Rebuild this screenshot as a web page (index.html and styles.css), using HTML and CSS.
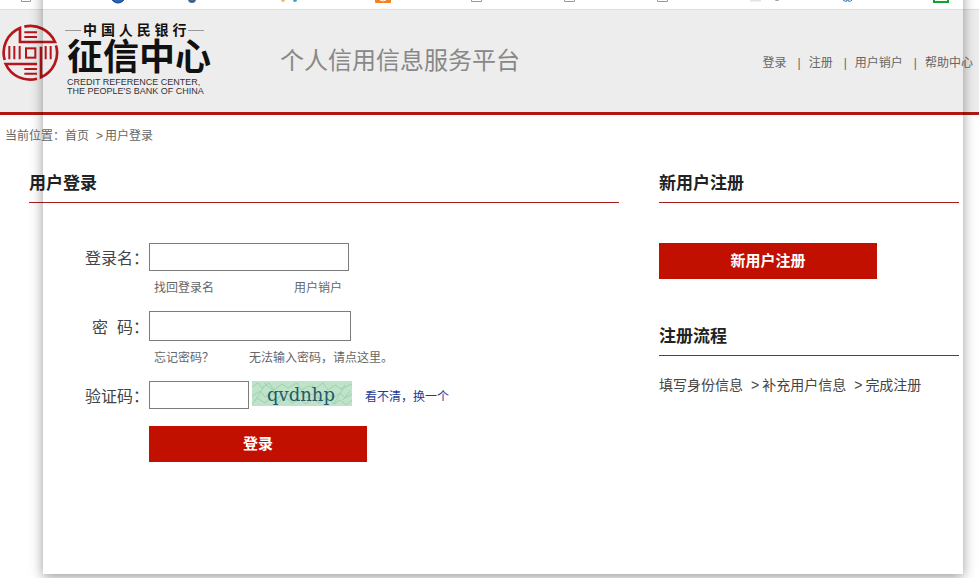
FILE: index.html
```html
<!DOCTYPE html>
<html lang="zh-CN">
<head>
  <meta charset="UTF-8">
  <meta name="viewport" content="width=device-width, initial-scale=1.0">
  <title>个人信用信息服务平台</title>
  <link rel="stylesheet" href="styles.css">
</head>
<body>
  <!-- 顶部书签栏 -->
  <div class="bookmarks">
    <svg width="979" height="9" viewBox="0 0 979 9" aria-hidden="true">
      <g fill="none" stroke="#999">
        <path d="M21.5 0V1.5H30.5V0M471.5 0V1.5H481.5V0M564.5 0V1.5H574.5V0M657.5 0V1.5H667.5V0"/>
      </g>
      <circle cx="118" cy="-4" r="7" fill="#2763b8" stroke="#163c7d"/>
      <circle cx="192" cy="-1" r="4" fill="#456390"/>
      <circle cx="283" cy="0" r="2" fill="#e0c36a"/>
      <circle cx="295" cy="0" r="2" fill="#3ea2c8"/>
      <rect x="375" y="-10" width="16" height="13" rx="1" fill="#f5821f"/>
      <path d="M380 0q3 2 6 0" stroke="#fff" fill="none"/>
      <path d="M750 .5H761" stroke="#e4e4e4" stroke-width="2"/>
      <path d="M775 0q2 1 4 0" stroke="#999" fill="none"/>
      <path d="M843 0q2 2 4 1v-1M848 0v1q3 1 4-1" stroke="#2f74c9" fill="none"/>
      <path d="M934 0V2H948V0" stroke="#17a02b" stroke-width="2" fill="none"/>
    </svg>
  </div>

  <header class="header">
    <a class="logo" href="#">
      <svg class="seal" width="58" height="58" viewBox="0 0 174 174" fill="none" stroke="#b5161b" aria-hidden="true">
        <g stroke-width="8">
          <path d="M70 8A80 80 0 0 1 162 54H57V12A80 80 0 0 0 11 108"/>
          <path d="M108 164A80 80 0 0 1 14 120H108"/>
          <path d="M120 68V160A80 80 0 0 0 165 64"/>
        </g>
        <g stroke-width="6">
          <path d="M70 25H108M70 39H108M70 135H108M70 149H108"/>
          <path d="M25 66V106M40 66V106M56 66V106M134 66V106M149 66V106"/>
          <rect x="75" y="73" width="28" height="28"/>
        </g>
      </svg>
      <span class="logo-text">
        <span class="logo-bank">中 国 人 民 银 行</span>
        <span class="logo-name">征信中心</span>
        <span class="logo-en">CREDIT REFERENCE CENTER,</span>
        <span class="logo-en">THE PEOPLE'S BANK OF CHINA</span>
      </span>
    </a>
    <h1 class="title">个人信用信息服务平台</h1>
    <nav class="nav">
      <a href="#">登录</a><span>|</span>
      <a href="#">注册</a><span>|</span>
      <a href="#">用户销户</a><span>|</span>
      <a href="#">帮助中心</a>
    </nav>
  </header>

  <div class="location">
    当前位置：<a href="#">首页</a><span class="arrow">&gt;</span>用户登录
  </div>

  <main class="main">
    <!-- 登录表单 -->
    <section>
      <h2>用户登录</h2>
      <form class="login-form">
        <label for="username">登录名：</label>
        <input type="text" id="username" name="username">

        <div class="hint">
          <a class="first" href="#">找回登录名</a>
          <a href="#">用户销户</a>
        </div>

        <label for="password">密&nbsp; 码：</label>
        <input type="password" id="password" name="password">

        <div class="hint">
          <a href="#">忘记密码？</a>
          <a class="second" href="#">无法输入密码，请点这里。</a>
        </div>

        <label for="code">验证码：</label>
        <div class="captcha">
          <input type="text" id="code" name="code">
          <svg width="100" height="25" viewBox="0 0 100 25">
            <rect width="100" height="25" fill="#bfe3c8"/>
            <g fill="none" stroke="#a0d0b0">
              <path d="M0 6l6-4 4 5 7-5 5 7 8-6 6 4 9-5 4 7 8-4 6 3 8-6 5 7 7-5 6 4 11-5"/>
              <path d="M0 15l8-5 5 6 7-4 5 5 9-6 5 5 7-6 8 7 6-4 7 5 6-7 8 6 7-5 5 5 7-4"/>
              <path d="M0 23l5-6 8 5 6-5 6 6 8-7 7 6 8-4 5 5 9-5 5 4 8-6 7 7 6-4 6 5 6-5"/>
              <path d="M3 20l9-15M24 22l5-9M60 4l8 15M82 23l11-19M91 19l7-9M12 2l10 8"/>
            </g>
            <text class="captcha-text" x="49" y="20" text-anchor="middle">qvdnhp</text>
          </svg>
          <a href="#">看不清，换一个</a>
        </div>

        <button type="submit" class="btn">登录</button>
      </form>
    </section>

    <!-- 注册 -->
    <aside>
      <h2>新用户注册</h2>
      <button type="button" class="btn btn-register">新用户注册</button>
      <h2>注册流程</h2>
      <p class="steps">填写身份信息<span class="arrow">&gt;</span>补充用户信息<span class="arrow">&gt;</span>完成注册</p>
    </aside>
  </main>

  <!-- 窗口阴影 -->
  <div class="frame"></div>
</body>
</html>
```
FILE: styles.css
```css
* {
  box-sizing: border-box;
}
body {
  margin: 0;
  background: #fff;
  color: #666;
  font-family: "Liberation Sans", "Noto Sans CJK SC", sans-serif;
  font-size: 12px;
}
a {
  color: inherit;
  text-decoration: none;
}
.bookmarks {
  height: 10px;
  overflow: hidden;
  border-bottom: 1px solid #ddd;
}
.bookmarks svg {
  display: block;
}

/* 页头 */
.header {
  display: flex;
  align-items: center;
  height: 105px;
  padding-right: 6px;
  background: #ededed;
  border-bottom: 3px solid #b01810;
}
.logo {
  display: flex;
  width: 280px;
  padding: 0 0 4px 1px;
  color: #111;
}
.seal {
  margin-top: 2px;
}
.logo-text {
  display: flex;
  flex-direction: column;
  margin-left: 6px;
}
.logo-bank {
  display: flex;
  align-items: center;
  gap: 2px;
  font-size: 14px;
  font-weight: bold;
  line-height: 16px;
}
.logo-bank::before,
.logo-bank::after {
  content: "";
  width: 16px;
  height: 1px;
  background: #999;
}
.logo-name {
  padding-left: 2px;
  font-size: 36px;
  font-weight: bold;
  line-height: 40px;
}
.logo-en {
  padding-left: 2px;
  color: #333;
  font-size: 9px;
  line-height: 9px;
}
.title {
  margin: 0;
  padding-bottom: 5px;
  color: #888;
  font-size: 24px;
  font-weight: normal;
}
.nav {
  display: flex;
  margin-left: auto;
  padding-top: 4px;
  line-height: 20px;
}
.nav span {
  margin: 0 8px 0 11px;
}

.location {
  padding-left: 5px;
  line-height: 42px;
}
.arrow {
  margin: 0 2px 0 7px;
}

/* 主体 */
.main {
  display: grid;
  grid-template-columns: 1fr 300px;
  gap: 40px;
  padding: 8px 20px 0 29px;
}
h2 {
  margin: 0 0 40px;
  border-bottom: 1px solid #a81c1c;
  color: #222;
  font-size: 17px;
  line-height: 37px;
}
.login-form {
  display: grid;
  grid-template-columns: 120px 1fr;
  justify-items: start;
  align-items: center;
}
label {
  justify-self: end;
  color: #444;
  font-size: 16px;
}
input {
  width: 200px;
  height: 28px;
  padding: 0 4px;
  border: 1px solid #7c7c7c;
  background: #fff;
  font-size: 14px;
}
#password {
  width: 202px;
  height: 30px;
}
#code {
  width: 100px;
}
.hint {
  display: flex;
  grid-column: 2;
  margin-bottom: 6px;
  padding-left: 5px;
  line-height: 34px;
}
.hint .first {
  width: 140px;
}
.hint .second {
  margin-left: 35px;
}
.captcha {
  display: flex;
  gap: 3px;
}
.captcha a {
  margin-left: 10px;
  color: #1c3c94;
  line-height: 32px;
}
.captcha-text {
  fill: #23596b;
  font-family: "DejaVu Serif", serif;
  font-size: 18px;
}
.btn {
  width: 218px;
  height: 36px;
  padding: 0 0 4px;
  border: none;
  background: #c21000;
  color: #fff;
  font-family: inherit;
  font-size: 15px;
  font-weight: bold;
  cursor: pointer;
}
.captcha {
  height: 28px;
}
.login-form .btn {
  grid-column: 2;
  margin-top: 17px;
}
.btn-register {
  display: block;
  margin-bottom: 39px;
}
aside h2:not(:first-child) {
  margin-bottom: 16px;
}
.steps {
  margin: 0;
  color: #444;
  font-size: 14px;
  line-height: 26px;
}
.steps .arrow {
  margin: 0 3px 0 8px;
}

/* 浮在页面上的阴影边框 */
.frame {
  position: fixed;
  top: -20px;
  right: 16px;
  bottom: 4px;
  left: 43px;
  box-shadow: 0 3px 12px rgba(0, 0, 0, 0.4);
  pointer-events: none;
}
```
